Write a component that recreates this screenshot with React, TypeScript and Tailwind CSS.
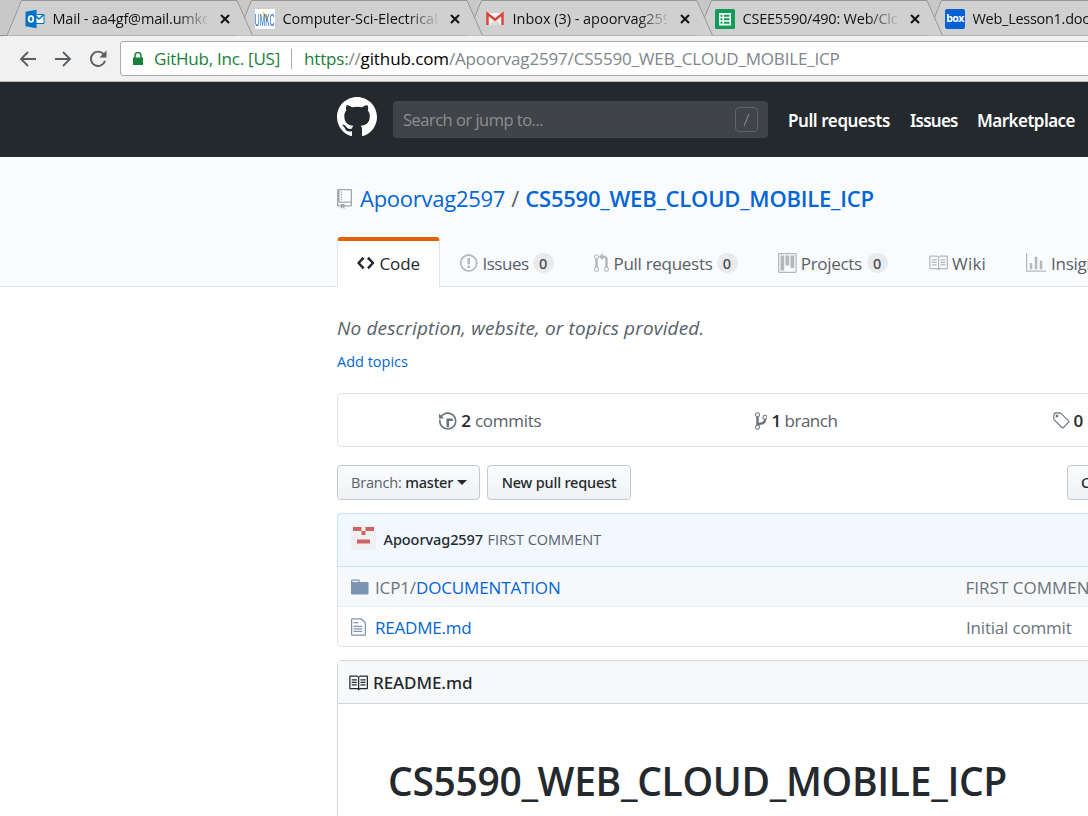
import type { ReactNode } from "react";

type IconProps = { d: string; w: number; h?: number; className?: string };

function Octicon({ d, w, h = 16, className = "" }: IconProps) {
  return (
    <svg
      viewBox={`0 0 ${w} ${h}`}
      width={w * 1.25}
      height={h * 1.25}
      fill="currentColor"
      className={`shrink-0 ${className}`}
      aria-hidden="true"
    >
      <path fillRule="evenodd" d={d} />
    </svg>
  );
}

const icons = {
  repo: "M4 9H3V8h1v1zm0-3H3v1h1V6zm0-2H3v1h1V4zm0-2H3v1h1V2zm8-1v12c0 .55-.45 1-1 1H6v2l-1.5-1.5L3 16v-2H1c-.55 0-1-.45-1-1V1c0-.55.45-1 1-1h10c.55 0 1 .45 1 1zm-1 10H1v2h2v-1h3v1h5v-2zm0-10H2v9h9V1z",
  code: "M9.5 3L8 4.5 11.5 8 8 11.5 9.5 13 14 8 9.5 3zm-5 0L0 8l4.5 5L6 11.5 2.5 8 6 4.5 4.5 3z",
  issue: "M7 2.3c3.14 0 5.7 2.56 5.7 5.7s-2.56 5.7-5.7 5.7A5.71 5.71 0 0 1 1.3 8c0-3.14 2.56-5.7 5.7-5.7zM7 1C3.14 1 0 4.14 0 8s3.14 7 7 7 7-3.14 7-7-3.14-7-7-7zm1 3H6v5h2V4zm0 6H6v2h2v-2z",
  pull: "M11 11.28V5c-.03-.78-.34-1.47-.94-2.06C9.46 2.35 8.78 2.03 8 2H7V0L4 3l3 3V4h1c.27.02.48.11.69.31.21.2.3.42.31.69v6.28A1.993 1.993 0 0 0 10 15a1.993 1.993 0 0 0 1-3.72zm-1 2.92c-.66 0-1.2-.55-1.2-1.2 0-.65.55-1.2 1.2-1.2.65 0 1.2.55 1.2 1.2 0 .65-.55 1.2-1.2 1.2zM4 3c0-1.11-.89-2-2-2a1.993 1.993 0 0 0-1 3.72v6.56A1.993 1.993 0 0 0 2 15a1.993 1.993 0 0 0 1-3.72V4.72c.59-.34 1-.98 1-1.72zm-.8 10c0 .66-.55 1.2-1.2 1.2-.65 0-1.2-.55-1.2-1.2 0-.65.55-1.2 1.2-1.2.65 0 1.2.55 1.2 1.2zM2 4.2C1.34 4.2.8 3.65.8 3c0-.65.55-1.2 1.2-1.2.65 0 1.2.55 1.2 1.2 0 .65-.55 1.2-1.2 1.2z",
  project: "M10 12h3V2h-3v10zm-4-2h3V2H6v8zm-4 4h3V2H2v12zm-1 1h13V1H1v14zM14 0H1a1 1 0 0 0-1 1v14a1 1 0 0 0 1 1h13a1 1 0 0 0 1-1V1a1 1 0 0 0-1-1z",
  book: "M3 5h4v1H3V5zm0 3h4V7H3v1zm0 2h4V9H3v1zm11-5h-4v1h4V5zm0 2h-4v1h4V7zm0 2h-4v1h4V9zm2-6v9c0 .55-.45 1-1 1H9.5l-1 1-1-1H2c-.55 0-1-.45-1-1V3c0-.55.45-1 1-1h5.5l1 1 1-1H15c.55 0 1 .45 1 1zm-8 .5L7.5 3H2v9h6V3.5zm7-.5H9.5l-.5.5V12h6V3z",
  graph: "M16 14v1H0V0h1v14h15zM5 13H3V8h2v5zm4 0H7V3h2v10zm4 0h-2V6h2v7z",
  history: "M8 13H6V6h5v2H8v5zM7 1C4.81 1 2.87 2.02 1.59 3.59L0 2v4h4L2.5 4.5C3.55 3.17 5.17 2.3 7 2.3c3.14 0 5.7 2.56 5.7 5.7s-2.56 5.7-5.7 5.7A5.71 5.71 0 0 1 1.3 8c0-.34.03-.67.09-1H.08C.03 7.33 0 7.66 0 8c0 3.86 3.14 7 7 7s7-3.14 7-7-3.14-7-7-7z",
  branch: "M10 5c0-1.11-.89-2-2-2a1.993 1.993 0 0 0-1 3.72v.3c-.02.52-.23.98-.63 1.38-.4.4-.86.61-1.38.63-.83.02-1.48.16-2 .45V4.72a1.993 1.993 0 0 0-1-3.72C.88 1 0 1.89 0 3a2 2 0 0 0 1 1.72v6.56c-.59.35-1 .99-1 1.72 0 1.11.89 2 2 2 1.11 0 2-.89 2-2 0-.53-.2-1-.53-1.36.09-.06.48-.41.59-.47.25-.11.56-.17.94-.17 1.05-.05 1.95-.45 2.75-1.25S8.95 7.77 9 6.73h-.02C9.59 6.37 10 5.73 10 5zM2 1.8c.66 0 1.2.55 1.2 1.2 0 .65-.55 1.2-1.2 1.2C1.35 4.2.8 3.65.8 3c0-.65.55-1.2 1.2-1.2zm0 12.41c-.66 0-1.2-.55-1.2-1.2 0-.65.55-1.2 1.2-1.2.65 0 1.2.55 1.2 1.2 0 .65-.55 1.2-1.2 1.2zm6-8c-.66 0-1.2-.55-1.2-1.2 0-.65.55-1.2 1.2-1.2.65 0 1.2.55 1.2 1.2 0 .65-.55 1.2-1.2 1.2z",
  tag: "M7.685 1.72a2.49 2.49 0 0 0-1.76-.726H3.48A2.5 2.5 0 0 0 .994 3.48v2.456c0 .656.269 1.292.726 1.76l6.024 6.024a.99.99 0 0 0 1.402 0l4.563-4.563a.99.99 0 0 0 0-1.402L7.685 1.72zM2.366 7.048a1.54 1.54 0 0 1-.467-1.123V3.48c0-.874.716-1.58 1.58-1.58h2.456c.418 0 .825.159 1.123.467l6.104 6.094-4.702 4.702-6.094-6.114zm.626-4.066h1.989v1.989H2.982V2.982h.01z",
  folder: "M13 4H7V3c0-.66-.31-1-1-1H1c-.55 0-1 .45-1 1v10c0 .55.45 1 1 1h12c.55 0 1-.45 1-1V5c0-.55-.45-1-1-1zM6 4H1V3h5v1z",
  file: "M6 5H2V4h4v1zM2 8h7V7H2v1zm0 2h7V9H2v1zm0 2h7v-1H2v1zm10-7.5V14c0 .55-.45 1-1 1H1c-.55 0-1-.45-1-1V2c0-.55.45-1 1-1h7.5L12 4.5zM11 5L8 2H1v12h10V5z",
  mark: "M8 0C3.58 0 0 3.58 0 8c0 3.54 2.29 6.53 5.47 7.59.4.07.55-.17.55-.38 0-.19-.01-.82-.01-1.49-2.01.37-2.53-.49-2.69-.94-.09-.23-.48-.94-.82-1.13-.28-.15-.68-.52-.01-.53.63-.01 1.08.58 1.23.82.72 1.21 1.87.87 2.33.66.07-.52.28-.87.51-1.07-1.78-.2-3.64-.89-3.64-3.95 0-.87.31-1.59.82-2.15-.08-.2-.36-1.02.08-2.12 0 0 .67-.21 2.2.82.64-.18 1.32-.27 2-.27.68 0 1.36.09 2 .27 1.53-1.04 2.2-.82 2.2-.82.44 1.1.16 1.92.08 2.12.51.56.82 1.27.82 2.15 0 3.07-1.87 3.75-3.65 3.95.29.25.54.73.54 1.48 0 1.07-.01 1.93-.01 2.2 0 .21.15.46.55.38A8.013 8.013 0 0 0 16 8c0-4.42-3.58-8-8-8z",
};

const OutlookIcon = () => (
  <svg width="20" height="20" viewBox="0 0 20 20">
    <path d="M10 5.500h9v9h-9z" fill="#fff" stroke="#0072c6" />
    <path d="M11 7l3 3 5-4.500" fill="none" stroke="#0072c6" strokeWidth="1.500" />
    <path d="M0.500 2.700L11.500 0.800v18.400L0.500 17.300z" fill="#0072c6" />
    <ellipse cx="6" cy="10" rx="2.300" ry="2.900" fill="none" stroke="#fff" strokeWidth="1.800" />
  </svg>
);

const UmkcIcon = () => (
  <span className="relative flex h-5 w-5 items-end justify-center overflow-hidden bg-white">
    <svg width="20" height="20" viewBox="0 0 20 20" className="absolute inset-0">
      <path d="M7.500 2l5 5.500v4L8.500 6z" fill="#f5c518" />
    </svg>
    <span className="relative origin-bottom scale-x-[0.56] scale-y-[1.4] font-['Liberation_Sans'] text-[12px] leading-[12px] text-[#1565c8]">
      UMKC
    </span>
  </span>
);

const GmailIcon = () => (
  <svg width="20" height="20" viewBox="0 0 20 20">
    <path d="M2 4h16v12H2z" fill="#f3f3f3" />
    <path d="M4 16l6-6 6 6z" fill="#dcdcdc" />
    <path d="M2.500 16V4.800L10 10.800l7.500-6V16" fill="none" stroke="#dc4337" strokeWidth="2.400" />
  </svg>
);

const SheetsIcon = () => (
  <svg width="20" height="20" viewBox="0 0 20 20">
    <rect width="20" height="20" rx="1.500" fill="#0f9d58" />
    <path d="M4 4h12v12.500H4z" fill="#fff" />
    <path d="M5.500 5.800h2v2h-2zM9 5.800h5.500v2H9zM5.500 9.300h2v2h-2zM9 9.300h5.500v2H9zM5.500 12.800h2v2h-2zM9 12.800h5.500v2H9z" fill="#0f9d58" />
  </svg>
);

const BoxIcon = () => (
  <span className="flex h-5 w-5 items-center justify-center rounded-[2px] bg-[#0061d5] pb-px font-['Open_Sans'] text-[10.5px] leading-none font-bold tracking-[-0.6px] text-white">
    box
  </span>
);

const browserTabs: { title: string; icon: ReactNode; z: string; track: string }[] = [
  { title: "Mail - aa4gf@mail.umkc.edu", icon: <OutlookIcon />, z: "z-50", track: "tracking-[-0.18px]" },
  { title: "Computer-Sci-Electrical Eng", icon: <UmkcIcon />, z: "z-40", track: "tracking-[-0.05px]" },
  { title: "Inbox (3) - apoorvag2597@gmail", icon: <GmailIcon />, z: "z-30", track: "tracking-[-0.03px]" },
  { title: "CSEE5590/490: Web/Cloud", icon: <SheetsIcon />, z: "z-20", track: "tracking-[-0.22px]" },
  { title: "Web_Lesson1.docx", icon: <BoxIcon />, z: "z-10", track: "tracking-[-0.28px]" },
];

function BrowserTab({ title, icon, z, track }: (typeof browserTabs)[number]) {
  return (
    <div className={`relative flex h-9 w-[230px] shrink-0 items-center pt-[2px] pl-[18px] ${z}`}>
      <svg width="246" height="36" className="absolute top-0 left-0" aria-hidden="true">
        <path d="M0 35.500L14.500 0.500H230L245.500 35.500" fill="#d0d0d0" stroke="#969696" />
      </svg>
      <span className="relative">{icon}</span>
      <span
        className={`relative ml-[7.500px] w-[154.500px] overflow-hidden text-[14.5px] leading-5 whitespace-nowrap text-[#111] [mask-image:linear-gradient(to_right,black_124px,transparent_158px)] ${track}`}
      >
        {title}
      </span>
      <svg width="10" height="10" viewBox="0 0 10 10" className="relative ml-[13px] shrink-0" aria-hidden="true">
        <path d="M1 1l8 8M9 1L1 9" stroke="#111" strokeWidth="2" />
      </svg>
    </div>
  );
}

function Counter({ gap }: { gap: string }) {
  return (
    <span className={`flex h-5 w-[21px] items-center justify-center rounded-full bg-[#e9eaec] pt-px font-['Noto_Sans'] text-[14.5px] leading-none font-[550] text-[#444d56] ${gap}`}>
      0
    </span>
  );
}

type RepoTabProps = { icon: string; w: number; label: string; countGap?: string; width: string; text: string };

function RepoTab({ icon, w, label, countGap, width, text }: RepoTabProps) {
  return (
    <div className={`flex shrink-0 items-center pt-[2px] text-[17px] text-[#586069] ${width}`}>
      <Octicon d={icon} w={w} className="text-[#b4b8bc]" />
      <span className={text}>{label}</span>
      {countGap && <Counter gap={countGap} />}
    </div>
  );
}

const btn =
  "flex h-[35px] shrink-0 items-center rounded-[4px] border border-[#c5c9cd] bg-linear-to-b from-[#fafbfc] to-[#eff3f6] font-['Noto_Sans'] text-[14.5px] tracking-[-0.19px] font-[550] text-[#24292e]";

export default function App() {
  return (
    <div className="h-[816px] w-full overflow-hidden bg-white font-['Open_Sans',sans-serif] whitespace-nowrap text-[#24292e]">
      <div className="relative flex h-9 border-b border-[#969696] bg-[#c8c8c8] pl-[7px]">
        {browserTabs.map((t) => (
          <BrowserTab key={t.title} {...t} />
        ))}
      </div>

      <div className="flex h-[46px] items-center border-b border-[#b6b6b6] bg-[#f1f1f1]">
        <div className="flex w-[120px] shrink-0 items-center gap-[17px] pl-[19px] text-[#5a5d61]">
          <svg width="18" height="18" viewBox="0 0 18 18" fill="none" stroke="currentColor" strokeWidth="1.800">
            <path d="M17 9H2.500M9 2L2 9l7 7" />
          </svg>
          <svg width="18" height="18" viewBox="0 0 18 18" fill="none" stroke="currentColor" strokeWidth="1.800">
            <path d="M1 9h14.500M9 2l7 7-7 7" />
          </svg>
          <svg width="18" height="18" viewBox="0 0 18 18" fill="none" stroke="currentColor" strokeWidth="1.900">
            <path d="M14.600 4.200A7.200 7.200 0 1 0 16 10.800" />
            <path d="M17.500 0.500v7h-7z" fill="currentColor" stroke="none" />
          </svg>
        </div>
        <div className="flex h-[35px] w-[1000px] shrink-0 items-center rounded-[3px] border border-[#a9a9a9] bg-white pl-3 text-[17px]">
          <svg width="10" height="14" viewBox="0 0 10 14" className="shrink-0">
            <path d="M0 5.500h10V13H0z" fill="#188038" />
            <path d="M2 6V3.500a3 3 0 0 1 6 0V6" fill="none" stroke="#188038" strokeWidth="1.500" />
          </svg>
          <span className="ml-[11px] w-[127px] tracking-[-0.23px] text-[#188038]">GitHub, Inc. [US]</span>
          <span className="ml-[10px] h-5 w-px bg-[#a9a9a9]" />
          <span className="ml-3 tracking-[-0.18px] text-[#188038]">
            https:<span className="text-[#80868b]">//</span>
          </span>
          <span className="tracking-[-0.1px] text-black">github.com</span>
          <span className="tracking-[-0.17px] text-[#80868b]">/Apoorvag2597/CS5590_WEB_CLOUD_MOBILE_ICP</span>
        </div>
      </div>

      <header className="flex h-[75px] items-center bg-[#24292e] pl-[337px]">
        <svg width="40" height="40" viewBox="0 0 16 16" fill="#fff" className="mb-[5px] shrink-0">
          <path fillRule="evenodd" d={icons.mark} />
        </svg>
        <div className="ml-4 flex h-[37px] w-[375px] shrink-0 items-center justify-between rounded-[4px] bg-[#404448] px-[10px] text-[16.5px] tracking-[-0.51px] text-[#8c8f92]">
          <span className="pt-[2px]">Search or jump to...</span>
          <svg width="23" height="25" viewBox="0 0 23 25" fill="none">
            <rect x="0.500" y="0.500" width="22" height="24" rx="3.500" stroke="#5f6367" />
            <path d="M14 7l-5 12" stroke="#8c8f92" />
          </svg>
        </div>
        <nav className="flex pt-[3px] pl-5 font-['Noto_Sans'] text-[17px] font-semibold text-white">
          <span className="w-[122px] tracking-[-0.42px]">Pull requests</span>
          <span className="w-[67px] tracking-[-0.75px]">Issues</span>
          <span className="tracking-[-0.53px]">Marketplace</span>
        </nav>
      </header>

      <section className="flex h-[130px] flex-col justify-between border-b border-[#e1e4e8] bg-[#fafbfc] pl-[337px]">
        <h1 className="flex h-[80px] items-center pt-[3px] text-[22px] text-[#0366d6]">
          <Octicon d={icons.repo} w={12} className="text-[#a0a6ad]" />
          <span className="ml-2 tracking-[-0.26px]">Apoorvag2597</span>
          <span className="mx-[6px] text-[#586069]">/</span>
          <span className="font-semibold tracking-[-0.21px]">CS5590_WEB_CLOUD_MOBILE_ICP</span>
        </h1>
        <div className="-mb-px flex h-[50px]">
          <div className="flex w-[103px] shrink-0 items-center rounded-t-[4px] border-x border-t-4 border-x-[#e1e4e8] border-t-[#e36209] bg-white pl-[19px] text-[17px] tracking-[-0.1px]">
            <Octicon d={icons.code} w={14} className="-mt-[2px]" />
            <span className="-mt-px ml-[5px]">Code</span>
          </div>
          <div className="flex pl-5">
            <RepoTab icon={icons.issue} w={14} label="Issues" countGap="ml-[4px]" width="w-[134px]" text="pt-px ml-[5px] tracking-[-0.5px]" />
            <RepoTab icon={icons.pull} w={12} label="Pull requests" countGap="ml-[4px]" width="w-[184px]" text="pt-px ml-[4.500px] tracking-[-0.29px]" />
            <RepoTab icon={icons.project} w={15} label="Projects" countGap="ml-[5px]" width="w-[150px]" text="pt-px ml-[4px] tracking-[-0.32px]" />
            <RepoTab icon={icons.book} w={16} label="Wiki" width="w-[98px]" text="pt-px ml-[4px] tracking-[0.2px]" />
            <RepoTab icon={icons.graph} w={16} label="Insights" width="w-[120px]" text="pt-px ml-[5px] tracking-[-0.25px]" />
          </div>
        </div>
      </section>

      <main className="w-[1562px] pl-[337px]">
        <p className="pt-[27px] text-[19px] leading-7 tracking-[0.15px] text-[#586069] italic">
          No description, website, or topics provided.
        </p>
        <p className="mt-[8px] mb-[19px] text-[14.5px] leading-6 text-[#0366d6]">Add topics</p>

        <div className="grid h-[54px] grid-cols-4 rounded-[4px] border border-[#dfe2e5] pt-px text-[17px] tracking-[-0.25px] text-[#586069]">
          <div className="flex items-center justify-center gap-[4.500px]">
            <Octicon d={icons.history} w={14} className="-ml-px text-[#6a737d]" />
            <span><b className="font-semibold text-[#24292e]">2</b> commits</span>
          </div>
          <div className="flex items-center justify-center gap-[4px] pr-px">
            <Octicon d={icons.branch} w={10} className="text-[#6a737d]" />
            <span className="tracking-[-0.5px]"><b className="font-semibold text-[#24292e]">1</b> branch</span>
          </div>
          <div className="flex items-center justify-center gap-[4px] pr-[2px]">
            <Octicon d={icons.tag} w={14} className="text-[#6a737d]" />
            <span><b className="font-semibold text-[#24292e]">0</b> releases</span>
          </div>
          <div />
        </div>

        <div className="mt-[18px] flex">
          <div className={`${btn} w-[143px] pl-[13px]`}>
            <span className="font-['Open_Sans'] font-normal text-[#586069]">Branch:&nbsp;</span>master
            <span className="ml-1 border-x-[5px] border-t-[5px] border-x-transparent border-t-[#24292e]" />
          </div>
          <div className={`${btn} ml-[7px] w-[144px] justify-center`}>New pull request</div>
          <div className={`${btn} ml-[436px] w-[136px] pl-[13px]`}>Create new file</div>
        </div>

        <div className="mt-[13px] rounded-[4px] border border-[#dfe2e5] text-[17px]">
          <div className="-mx-px -mt-px flex h-[54px] items-center rounded-t-[4px] border border-[#c8e1ff] bg-[#f1f8ff] pl-[13px] text-[14.5px]">
            <svg width="25" height="25" viewBox="0 0 25 25" className="mb-[6px] shrink-0">
              <rect width="25" height="25" rx="3" fill="#f0f0f0" />
              <path d="M2 2h8.500v4H2zM14.500 2H23v4h-8.500zM10.500 6h4v4h-4zM6 14.500h13v4H6z" fill="#cd6464" />
            </svg>
            <b className="ml-[7.500px] font-['Noto_Sans'] font-[550] tracking-[-0.08px]">Apoorvag2597</b>
            <span className="ml-[4.500px] text-[#586069]">FIRST COMMENT</span>
          </div>
          <div className="flex h-10 items-center border-b border-[#eaecef] bg-[#f6f8fa] pl-[13px]">
            <Octicon d={icons.folder} w={14} className="text-[#7d94b2]" />
            <span className="ml-[6.500px] w-[590.500px] pt-[2px] tracking-[-0.14px] text-[#0366d6]">
              <span className="text-[#6a737d]">ICP1/</span>DOCUMENTATION
            </span>
            <span className="pt-[2px] tracking-[0.02px] text-[#6a737d]">FIRST COMMENT</span>
          </div>
          <div className="flex h-[39px] items-center pl-[13px] pt-px">
            <Octicon d={icons.file} w={12} className="text-[#7d94b2]" />
            <span className="ml-[9px] w-[591px] pt-[2px] tracking-[-0.2px] text-[#0366d6]">README.md</span>
            <span className="pt-[2px] tracking-[-0.19px] text-[#6a737d]">Initial commit</span>
          </div>
        </div>

        <div className="mt-[13px] h-[300px] rounded-[4px] border border-[#d1d5da]">
          <div className="flex h-[43px] items-center border-b border-[#d1d5da] bg-[#f6f8fa] pl-[10px] font-['Noto_Sans'] text-[17px] font-[550] tracking-[-0.08px]">
            <Octicon d={icons.book} w={16} className="mt-px" />
            <span className="ml-[5px] pt-px">README.md</span>
          </div>
          <h2 className="pt-[52px] pl-[50px] text-[39px] leading-[50px] font-semibold tracking-[-0.33px]">
            CS5590_WEB_CLOUD_MOBILE_ICP
          </h2>
        </div>
      </main>
    </div>
  );
}
